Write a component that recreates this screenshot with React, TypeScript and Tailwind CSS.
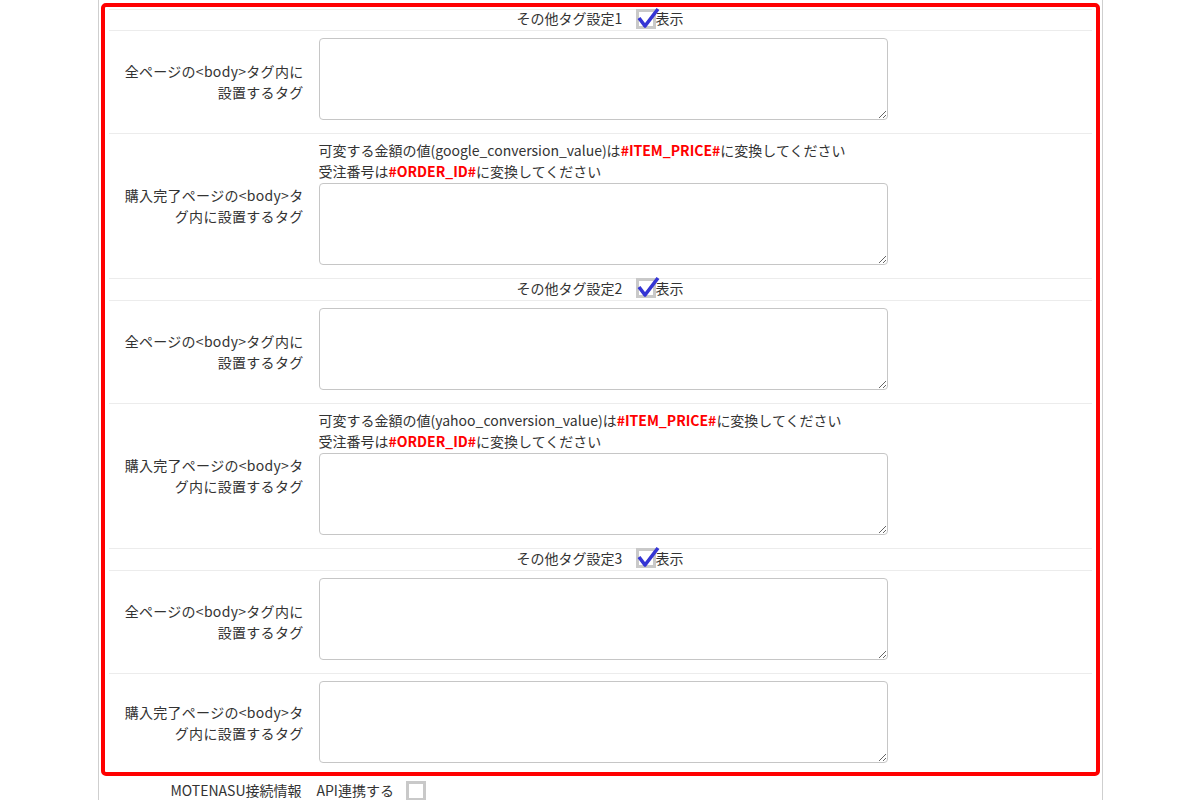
import type { ReactNode } from "react";

const font = {
  fontFamily: '"Noto Sans CJK JP", "Noto Sans", sans-serif',
};

type TagGroup = {
  title: string;
  note?: string;
  withNotes: boolean;
};

const groups: TagGroup[] = [
  { title: "その他タグ設定1", note: "google_conversion_value", withNotes: true },
  { title: "その他タグ設定2", note: "yahoo_conversion_value", withNotes: true },
  { title: "その他タグ設定3", withNotes: false },
];

function CheckedBox() {
  return (
    <span className="relative inline-block h-[20px] w-[20px] border-[3px] border-[#c9c9c9] bg-white">
      <svg
        className="absolute -left-[3px] -top-[4px] overflow-visible"
        width="24"
        height="24"
        viewBox="0 0 24 24"
      >
        <path d="M3 10 L9 18 L22 1" fill="none" stroke="#3535d4" strokeWidth="3.6" strokeLinejoin="round" />
      </svg>
    </span>
  );
}

function EmptyBox() {
  return <span className="inline-block h-[20px] w-[20px] border-[3px] border-[#c9c9c9] bg-white" />;
}

function Area() {
  return (
    <textarea className="block h-[82px] w-[569px] rounded-[4px] border border-[#c6c6c6] bg-white outline-none" />
  );
}

function Row({ label, children, last }: { label: ReactNode; children: ReactNode; last?: boolean }) {
  return (
    <div className={`flex items-center ${last ? "" : "border-b border-[#ececec]"}`}>
      <div className="w-[203px] shrink-0 pr-[8px] text-right leading-[21px] tracking-[0.3px]">{label}</div>
      <div className={`pl-[7px] ${last ? "pt-[7px] pb-[9px]" : "pt-[7px] pb-[13px]"}`}>{children}</div>
    </div>
  );
}

function Header({ title, first }: { title: string; first?: boolean }) {
  return (
    <div
      className={`flex h-[22px] items-center justify-center border-b border-[#ececec] pb-[3px] ${
        first ? "border-t border-t-[#f3efe6]" : ""
      }`}
    >
      <span>{title}</span>
      <span className="ml-[14px] flex items-center">
        <CheckedBox />
        <span className="-ml-[1px]">表示</span>
      </span>
    </div>
  );
}

export default function App() {
  return (
    <div className="min-h-screen bg-white text-[14px] text-[#333]" style={font}>
      <div className="mx-auto min-h-screen w-[1005px] border-x border-[#cfcfcf] px-[2px] pt-[3px]">
        <div className="rounded-[5px] border-4 border-[#ff0000] px-[4px] pt-[2px]">
          {groups.map((g, gi) => (
            <div key={g.title}>
              <Header title={g.title} first={gi === 0} />
              <Row
                label={
                  <>
                    全ページの&lt;body&gt;タグ内に
                    <br />
                    設置するタグ
                  </>
                }
              >
                <Area />
              </Row>
              <Row
                last={gi === groups.length - 1}
                label={
                  <>
                    購入完了ページの&lt;body&gt;タ
                    <br />
                    グ内に設置するタグ
                  </>
                }
              >
                {g.withNotes && (
                  <div className="-mt-[1px] mb-[1px] leading-[21px]">
                    <div>
                      可変する金額の値({g.note})は
                      <span className="font-bold text-[#ff0000]">#ITEM_PRICE#</span>
                      に変換してください
                    </div>
                    <div>
                      受注番号は<span className="font-bold text-[#ff0000]">#ORDER_ID#</span>に変換してください
                    </div>
                  </div>
                )}
                <Area />
              </Row>
            </div>
          ))}
        </div>
        <div className="flex items-center px-[6px] pt-[4px]">
          <div className="w-[203px] shrink-0 pr-[8px] text-right">MOTENASU接続情報</div>
          <div className="flex items-center pl-[7px]">
            <span>API連携する</span>
            <span className="ml-[12px] flex">
              <EmptyBox />
            </span>
          </div>
        </div>
      </div>
    </div>
  );
}
